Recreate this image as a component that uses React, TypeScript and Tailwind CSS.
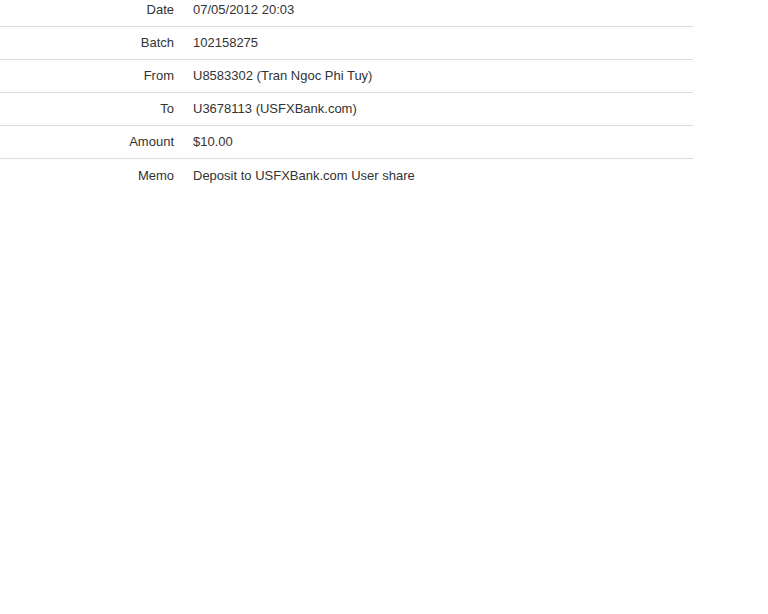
import React from "react";

const rows: [string, string][] = [
  ["Date", "07/05/2012 20:03"],
  ["Batch", "102158275"],
  ["From", "U8583302 (Tran Ngoc Phi Tuy)"],
  ["To", "U3678113 (USFXBank.com)"],
  ["Amount", "$10.00"],
  ["Memo", "Deposit to USFXBank.com User share"],
];

export default function App() {
  return (
    <div className="w-[768px] h-[614px] bg-white overflow-hidden" style={{ fontFamily: '"Liberation Sans", Arial, sans-serif' }}>
      <div className="w-[693px] -mt-[6px]">
        {rows.map(([k, v], i) => (
          <div
            key={k}
            className={`flex items-center h-[33px] text-[13px] text-[#333333] ${i < rows.length - 1 ? "border-b border-[#dedcd6]" : ""}`}
          >
            <div className="w-[174px] text-right">{k}</div>
            <div className="pl-[19px]">{v}</div>
          </div>
        ))}
      </div>
    </div>
  );
}
